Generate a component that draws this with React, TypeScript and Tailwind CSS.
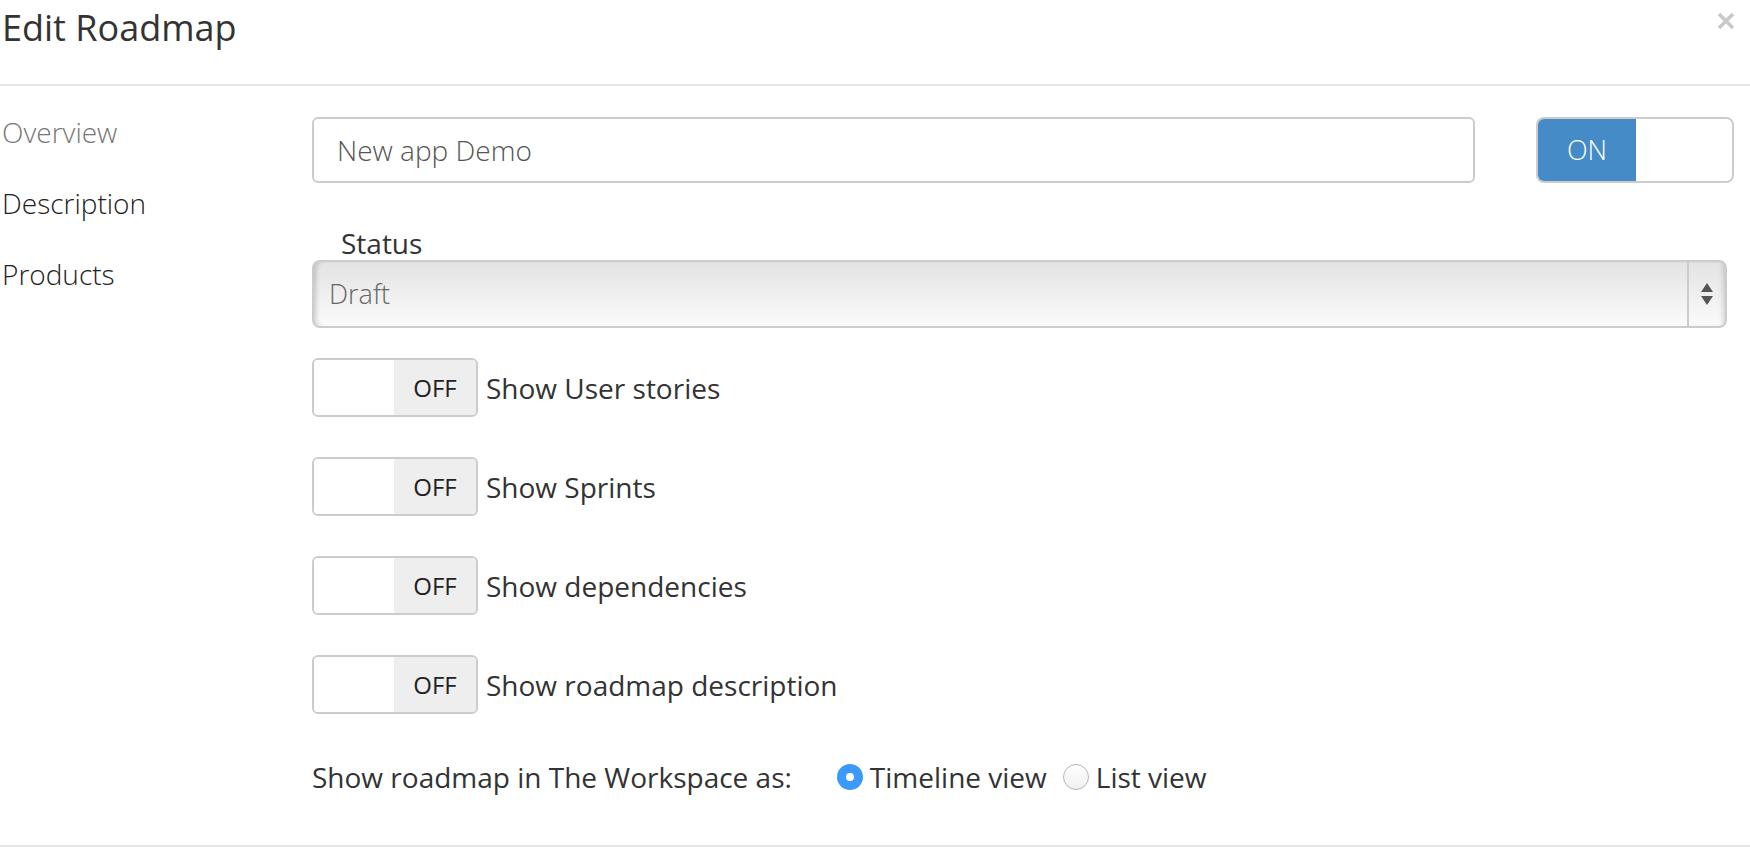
import React from "react";

const options = [
  "Show User stories",
  "Show Sprints",
  "Show dependencies",
  "Show roadmap description",
];

const nav = [
  { label: "Overview", muted: true },
  { label: "Description", muted: false },
  { label: "Products", muted: false },
];

function OffSwitch({ label }: { label: string }) {
  return (
    <div className="flex items-center">
      <div className="flex h-[59px] w-[166px] overflow-hidden rounded-[6px] border-2 border-[#cccccc]">
        <div className="flex-1 bg-white" />
        <div className="flex w-[82px] items-center justify-center bg-[#eeeeee] text-[24px] text-[#222]">
          OFF
        </div>
      </div>
      <span className="ml-[8px] text-[28px] leading-[36px] text-[#333]">{label}</span>
    </div>
  );
}

export default function App() {
  return (
    <div
      className="h-[858px] w-[1750px] overflow-hidden bg-white"
      style={{ fontFamily: '"Open Sans", "Noto Sans", sans-serif' }}
    >
      {/* header */}
      <div className="relative h-[86px] border-b-2 border-[#e5e5e5]">
        <h1 className="pl-[2px] pt-[4px] text-[36px] font-normal leading-[48px] text-[#333]">
          Edit Roadmap
        </h1>
        <button className="absolute right-[15px] top-[12px] h-[18px] w-[18px]">
          <svg viewBox="0 0 18 18" className="h-[18px] w-[18px]">
            <path d="M2 2 L16 16 M16 2 L2 16" stroke="#c8c8c8" strokeWidth="3.6" strokeLinecap="butt" />
          </svg>
        </button>
      </div>

      {/* body */}
      <div className="flex h-[761px] border-b-2 border-[#e5e5e5]">
        <div className="w-[312px] pl-[2px] pt-[28px]">
          {nav.map((item) => (
            <div
              key={item.label}
              className={`mb-[35px] text-[28px] font-light leading-[36px] ${
                item.muted ? "text-[#777]" : "text-[#222]"
              }`}
            >
              {item.label}
            </div>
          ))}
        </div>

        <div className="flex-1 pr-[16px] pt-[31px]">
          <div className="flex items-center">
            <div className="mr-[61px] flex h-[66px] flex-1 items-center rounded-[6px] border-2 border-[#cccccc] pl-[23px] text-[28px] font-light text-[#555]">
              New app Demo
            </div>
            <div className="flex h-[66px] w-[198px] overflow-hidden rounded-[8px] border-2 border-[#cccccc]">
              <div className="flex w-[98px] items-center justify-center bg-[#458bc8] text-[27px] font-light text-white">
                ON
              </div>
              <div className="flex-1 bg-white" />
            </div>
          </div>

          <div className="mt-[43px] pl-[29px] text-[28px] leading-[34px] text-[#333]">Status</div>

          <div className="mr-[7px] flex h-[68px] overflow-hidden rounded-[8px] border-2 border-[#cccccc] bg-linear-to-b from-[#e3e3e3] to-[#fbfbfb] shadow-[inset_5px_0_5px_-3px_rgba(0,0,0,0.18)]">
            <div className="flex flex-1 items-center pl-[15px] text-[27px] font-light text-[#666]">Draft</div>
            <div className="flex w-[38px] items-center justify-center border-l-2 border-[#cccccc] shadow-[inset_-5px_0_5px_-3px_rgba(0,0,0,0.15)]">
              <svg viewBox="0 0 14 26" className="h-[26px] w-[14px]">
                <path d="M7 2 L13 11 L1 11 Z M1 15 L13 15 L7 24 Z" fill="#555" />
              </svg>
            </div>
          </div>

          <div className="mt-[30px] flex flex-col gap-[40px]">
            {options.map((o) => (
              <OffSwitch key={o} label={o} />
            ))}
          </div>

          <div className="mt-[45px] flex items-center text-[28px] leading-[36px] text-[#333]">
            <span>Show roadmap in The Workspace as:</span>
            <label className="ml-[45px] flex items-center">
              <span className="flex h-[26px] w-[26px] items-center justify-center rounded-full bg-[#3b99fc]">
                <span className="h-[8px] w-[8px] rounded-full bg-white" />
              </span>
              <span className="ml-[7px]">Timeline view</span>
            </label>
            <label className="ml-[16px] flex items-center">
              <span className="h-[26px] w-[26px] rounded-full border border-[#b5b5b5] bg-linear-to-b from-white to-[#f0f0f0]" />
              <span className="ml-[7px]">List view</span>
            </label>
          </div>
        </div>
      </div>
    </div>
  );
}
